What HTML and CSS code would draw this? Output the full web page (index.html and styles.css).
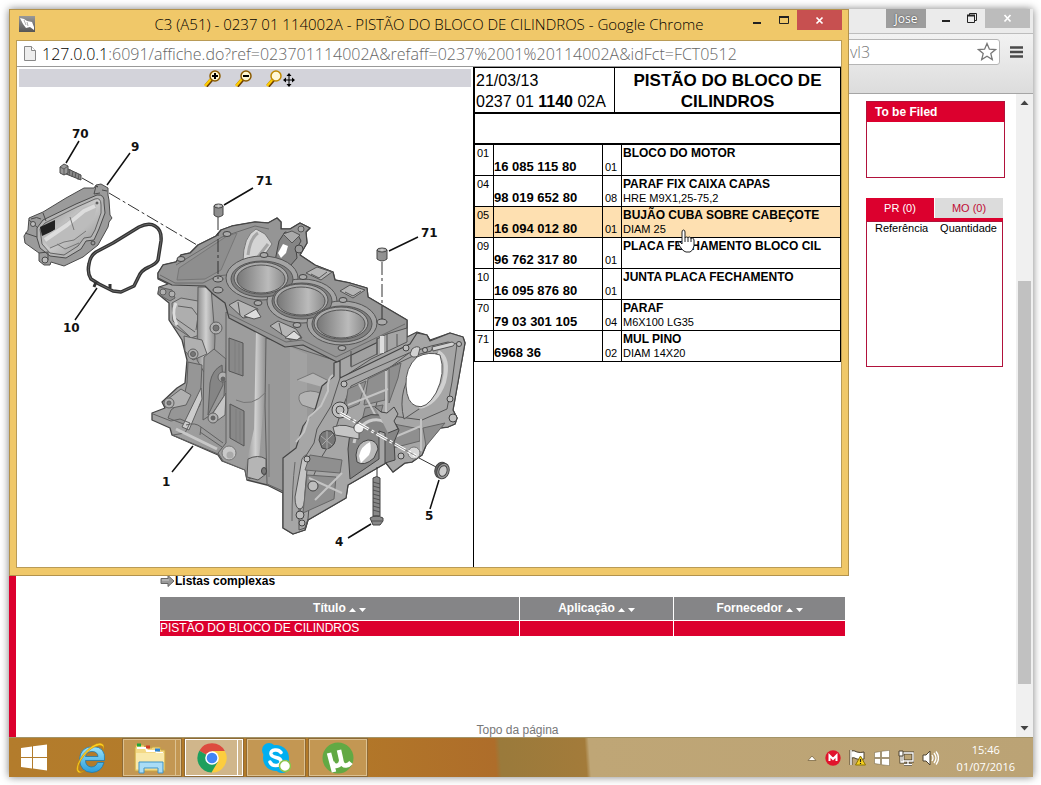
FILE: index.html
```html
<!DOCTYPE html>
<html lang="pt-BR">
<head>
<meta charset="utf-8">
<title>C3 (A51) - 0237 01 114002A</title>
<link rel="stylesheet" href="styles.css">
</head>
<body>
<div class="desktop">
  <section class="browser">
    <div class="browser-title">
      <button class="user-button">Jose</button>
      <div class="back-controls">
        <button aria-label="Minimizar"><svg width="26" height="19" viewBox="0 0 26 19"><path d="M9 12h8" stroke="#222" stroke-width="2"/></svg></button>
        <button aria-label="Restaurar"><svg width="26" height="19" viewBox="0 0 26 19"><path d="M8.500 6.500h7v7h-7zM10.500 6v-1.500h7v7H16" fill="none" stroke="#222"/><path d="M8 6.500h8" stroke="#222" stroke-width="2"/></svg></button>
        <button class="back-close" aria-label="Fechar"><svg width="45" height="19" viewBox="0 0 45 19"><path d="M19.500 6l6 6.500m0-6.500l-6 6.500" stroke="#fff" stroke-width="1.700"/></svg></button>
      </div>
    </div>
    <div class="browser-toolbar">
      <div class="back-address">
        <input type="text" aria-label="Endereço" value="vl3">
        <button aria-label="Favorito"><svg width="20" height="20" viewBox="0 0 20 20"><path d="M10 1.500l2.400 5.700 6.100.4-4.700 4 1.500 6L10 14.300l-5.300 3.300 1.500-6-4.700-4 6.100-.4z" fill="#fff" stroke="#777" stroke-width="1.300"/></svg></button>
      </div>
      <button class="menu-button" aria-label="Menu"><svg width="14" height="14" viewBox="0 0 14 14"><path d="M0 2.500h13M0 7h13M0 11.500h13" stroke="#4a4a4a" stroke-width="2.500"/></svg></button>
    </div>
    <div class="page">
      <main class="main">
        <h2 class="list-title"><svg width="15" height="14" viewBox="0 0 15 14"><path d="M1 4.500h7V1.500l6 5.500-6 5.500V9.500H1z" fill="#999" stroke="#666"/><path d="M2 6h7" stroke="#ccc"/></svg>Listas complexas</h2>
        <table class="list">
          <colgroup><col class="c-title"><col class="c-app"><col></colgroup>
          <thead><tr>
            <th>Título <svg width="17" height="5" viewBox="0 0 17 5"><path d="M0 5l3.500-4L7 5zM10 1h7l-3.500 4z" fill="#fff"/></svg></th>
            <th>Aplicação <svg width="17" height="5" viewBox="0 0 17 5"><path d="M0 5l3.500-4L7 5zM10 1h7l-3.500 4z" fill="#fff"/></svg></th>
            <th>Fornecedor <svg width="17" height="5" viewBox="0 0 17 5"><path d="M0 5l3.500-4L7 5zM10 1h7l-3.500 4z" fill="#fff"/></svg></th>
          </tr></thead>
          <tbody><tr><td>PISTÃO DO BLOCO DE CILINDROS</td><td></td><td></td></tr></tbody>
        </table>
        <a class="top-link" href="#">Topo da página</a>
      </main>
      <aside class="side">
        <section class="filed"><h3>To be Filed</h3></section>
        <section class="basket">
          <div class="tabs"><button class="tab active">PR (0)</button><button class="tab">MO (0)</button></div>
          <div class="basket-body"><span>Referência</span><span>Quantidade</span></div>
        </section>
      </aside>
      <div class="scrollbar">
        <svg width="17" height="17" viewBox="0 0 17 17"><path d="M4.500 11l4-4.500 4 4.500z" fill="#444"/></svg>
        <div class="track"><div class="thumb"></div></div>
        <svg width="17" height="17" viewBox="0 0 17 17"><path d="M4.500 6l4 4.500 4-4.500z" fill="#444"/></svg>
      </div>
    </div>
  </section>

  <section class="popup">
    <header class="popup-title">
      <svg class="app-icon" width="16" height="16" viewBox="0 0 16 16"><defs><linearGradient id="ai" x2="0" y2="1"><stop stop-color="#999"/><stop offset="1" stop-color="#555"/></linearGradient></defs><path fill="url(#ai)" d="M0 0h16v16H0z"/><path d="M1 2l4 1 3 2 5 1 2 5v3l-4-3-4 1-3-4z" fill="#fff"/><path d="M5 4l2 5M8 6l1 4" stroke="#999" stroke-width=".8"/></svg>
      <h1>C3 (A51) - 0237 01 114002A - PISTÃO DO BLOCO DE CILINDROS - Google Chrome</h1>
      <div class="popup-controls">
        <button aria-label="Minimizar"><svg width="27" height="20" viewBox="0 0 27 20"><path d="M10 13h8" stroke="#222" stroke-width="2"/></svg></button>
        <button aria-label="Maximizar"><svg width="27" height="20" viewBox="0 0 27 20"><path d="M9.500 6.500h9v7h-9z" fill="none" stroke="#222"/><path d="M9 7h10" stroke="#222" stroke-width="2"/></svg></button>
        <button class="close" aria-label="Fechar"><svg width="45" height="20" viewBox="0 0 45 20"><path d="M19.500 7.500l6 6m0-6l-6 6" stroke="#fff" stroke-width="1.700"/></svg></button>
      </div>
    </header>
    <div class="popup-frame">
      <div class="address">
        <svg width="12" height="15" viewBox="0 0 12 15"><path d="M.5.500h7l4 4v10H.5z" fill="#eee" stroke="#888"/><path d="M7.500.500v4h4" fill="#fff" stroke="#888"/></svg>
        <span><b>127.0.0.1</b>:6091/affiche.do?ref=023701114002A&amp;refaff=0237%2001%20114002A&amp;idFct=FCT0512</span>
      </div>
      <div class="panes">
        <div class="drawing">
          <div class="zoombar">
            <button aria-label="Aproximar"><svg width="18" height="17" viewBox="0 0 18 17"><path d="M2 16l6-7" stroke="#6b3d00" stroke-width="4"/><path d="M1 16l6-7" stroke="#fc0" stroke-width="2.500"/><circle cx="11" cy="6" r="5" fill="#fff6d0" stroke="#8a5a00" stroke-width="1.500"/><path d="M8 6h6M11 3v6" stroke="#000" stroke-width="2"/></svg></button>
            <button aria-label="Afastar"><svg width="18" height="17" viewBox="0 0 18 17"><path d="M2 16l6-7" stroke="#6b3d00" stroke-width="4"/><path d="M1 16l6-7" stroke="#fc0" stroke-width="2.500"/><circle cx="11" cy="6" r="5" fill="#fff6d0" stroke="#8a5a00" stroke-width="1.500"/><path d="M8 6h6" stroke="#000" stroke-width="2"/></svg></button>
            <button aria-label="Mover"><svg width="29" height="17" viewBox="0 0 29 17"><path d="M2 16l6-7" stroke="#6b3d00" stroke-width="4"/><path d="M1 16l6-7" stroke="#fc0" stroke-width="2.500"/><circle cx="10" cy="6" r="5" fill="#fff8d8" stroke="#c08a00" stroke-width="1.500"/><path d="M23 5v10M18 10h10" stroke="#000"/><path d="M23 3l-2.500 3h5zM23 17l-2.500-3h5zM17 10l3-2.500v5zM29 10l-3-2.500v5z"/></svg></button>
          </div>
          <svg class="engine" viewBox="17 87 456 480" role="img" aria-label="Bloco do motor">
            <defs>
              <linearGradient id="body" x2="1" y2=".3"><stop stop-color="#aaa"/><stop offset=".45" stop-color="#979797"/><stop offset="1" stop-color="#a9a9a9"/></linearGradient>
              <linearGradient id="bore"><stop stop-color="#777"/><stop offset=".35" stop-color="#9b9b9b"/><stop offset=".65" stop-color="#bbb"/><stop offset="1" stop-color="#8b8b8b"/></linearGradient>
              <linearGradient id="shine"><stop stop-color="#8b8b8b"/><stop offset=".5" stop-color="#d0d0d0"/><stop offset="1" stop-color="#8e8e8e"/></linearGradient>
              <linearGradient id="coverIn" x2="1" y2="1"><stop stop-color="#888"/><stop offset=".5" stop-color="#ccc"/><stop offset="1" stop-color="#8a8a8a"/></linearGradient>
            </defs>
            <!-- side cover -->
            <g stroke="#4b4b4b" stroke-linejoin="round">
              <path d="M29 218L43 212 66 198 84 188 94 188 96 185 101 184 108 188V195L109 200 110 215 112 218 109 222 108 227 98 245 83 257 64 266 51 262 50 265 44 265 39 261V253L25 243 24 236 28 230z" fill="#9b9b9b"/>
              <path d="M37 228L43 220 76 204 97 195Q105 194 104 203L105 213 99 229 94 240 86 241 81 249 66 258 50 256 40 248 37 238z" fill="#b4b4b4"/>
              <path d="M40 229L45 223 77 207 95 199Q101 197 101 205L101 213 95 230 91 237 84 238 78 246 64 255 50 253 42 244z" fill="url(#coverIn)" stroke-width=".8"/>
              <path d="M40 227l15-7v10l-13 6z" fill="#222" stroke="none"/>
              <path d="M42 238l24-16 18-15 12-4q2 12-8 22l-18 14-20 10z" fill="#bcbcbc" stroke="none"/>
              <path d="M45 240l22-15 17-14 11-5" stroke="#ddd" stroke-width="4" fill="none"/>
              <path d="M50 248l14-6 10-2 12-9M57 244l8 5 14-6M70 217l4 13" fill="none" stroke="#777"/>
              <path d="M29 220l9 8M43 213l3 8M25 233l12 4M96 186l-2 8 6-1M39 253l9-1v8M102 190l5 1M31 219q6-3 10 0" fill="none"/>
              <circle cx="97" cy="203" r="1" fill="#888"/><circle cx="93" cy="243" r="2" fill="#999"/><circle cx="33" cy="224" r="2.500" fill="#bbb"/><circle cx="45" cy="260" r="3" fill="#bbb"/>
              <path d="M66 168l15 7v5l-15-6z" fill="#888"/><path d="M70 169l-1 6M73 171l-1 6M76 172l-1 6M79 174l-1 6" fill="none" stroke-width=".8"/>
              <path d="M60 167l4-3 4 2v7l-4 2-4-2z" fill="#999"/><path d="M60 167l4 2 4-3M64 169v6" fill="none" stroke-width=".8"/>
            </g>
            <!-- gasket -->
            <g fill="none" stroke-linejoin="round">
              <path d="M139 227Q149 222 155 226 162 230 161 241L158 260Q156 264 149 267 141 270 138 278L134 286 121 292 113 291 99 284 91 279Q87 273 89 264 90 256 96 252L113 243z" stroke="#333" stroke-width="3.500"/>
              <path d="M139 227Q149 222 155 226 162 230 161 241L158 260Q156 264 149 267 141 270 138 278L134 286 121 292 113 291 99 284 91 279Q87 273 89 264 90 256 96 252L113 243z" stroke="#777" stroke-width=".8"/>
              <path d="M96 282l-2 5M110 284v4" stroke="#333" stroke-width="3"/>
            </g>
            <!-- block silhouette -->
            <path d="M158 273L163 265 176 262 181 255 190 253 198 245 216 236 221 230 232 226 255 222 268 223 277 218 281 222 281 229 290 229 300 223 310 228 306 232 307 243 300 255 315 265 320 267 333 272 335 280 350 283 367 288 368 297 407 320V337L417 332 427 335 430 340 450 333 463 337 465 343 453 410 457 418 455 424 448 427 440 428 427 443 422 455 412 462 405 463 393 472 386 463 348 485 346 498 308 520 305 530 293 534 283 528 283 493 267 485 247 480 245 470 222 461 218 455 172 435 170 428 152 420V413L165 408 162 402 177 388 185 383 187 360 182 340 169 320V303L158 294 159 287 168 284 158 279z" fill="url(#body)" stroke="#444" stroke-width="1.300" stroke-linejoin="round"/>
            <!-- left side castings -->
            <g stroke="#606060" stroke-linejoin="round" fill="#b0b0b0">
              <path d="M159 287l13 3 3 8-5 3-12-7z" fill="#8c8c8c"/><circle cx="163" cy="292" r="3"/><circle cx="172" cy="294" r="3"/>
              <path d="M172 303l9-5 17 3 9 8-2 24-14 5-18-17z" fill="#aeaeae"/>
              <path d="M178 306l14 2 6 8-2 14M175 318l20 14M172 325l18 12" fill="none"/>
              <path d="M176 303q-5 10 1 22" stroke="#ddd" stroke-width="3" fill="none"/>
              <path d="M198 287h13l4 50-1 27-10 8-7-12z" fill="url(#shine)"/>
              <circle cx="216" cy="328" r="6"/><circle cx="216" cy="328" r="3" fill="#777"/>
              <path d="M184 336l18 4 5 14-14 6-8-9z"/><circle cx="193" cy="354" r="5"/><circle cx="193" cy="354" r="2.500" fill="#777"/>
              <path d="M188 362l14 3-2 40-14 20-18-7 3-8 12-9 4-18z" fill="#969696"/>
              <path d="M164 402l17-13 10 6-5 10-14 3z"/><circle cx="169" cy="403" r="5"/><circle cx="169" cy="403" r="2" fill="#777"/>
              <path d="M204 357l10-8 12 10-2 37-12 18-9 6z" fill="#999"/>
              <path d="M222 365q-10 5-12 18l-2 32 15-30z" fill="#858585"/><circle cx="223" cy="377" r="5"/><circle cx="223" cy="379" r="2" fill="#666"/>
              <path d="M201 388l-19 39 7 3 13-31z" fill="#ccc"/>
              <path d="M226 393l-15 23 3 7 11-8z" fill="#c5c5c5"/><circle cx="213" cy="418" r="5"/><circle cx="213" cy="418" r="2" fill="#666"/>
              <path d="M153 414l18 7 9-2 10 4-5 10-12 2M186 425q9-3 15 2l22 16M200 432l22 15M172 435l46 19M201 427l-1 8" fill="none"/>
              <path d="M176 429l41 20" stroke="#c8c8c8" stroke-width="3"/>
            </g>
            <!-- long front side -->
            <path d="M226 312l34 20-3 143-10 5-2-10-22-9-5-8 8-10z" fill="#9d9d9d" stroke="#606060"/>
            <path d="M256 331h10v45l-7 85-9 15-5-7 9-40z" fill="url(#shine)"/>
            <path d="M266 338l71 23v20l-34 63-8 12-1 40-27-12-2-78z" fill="#999" stroke="#606060"/>
            <path d="M290 347l17 7v84l-17 20z" fill="#a5a5a5" opacity=".7"/>
            <path d="M229 338l14 5v33l-14-5zM230 404l14 7v35l-14-8z" fill="#898989" stroke="#555"/>
            <path d="M235 341v31M239 343v31M236 409v32M240 411v33" stroke="#777" stroke-width=".6"/>
            <circle cx="229" cy="453" r="7" fill="#c9c9c9" stroke="#777"/><circle cx="230" cy="455" r="3.500" fill="#aaa"/>
            <path d="M248 459q10-5 18 0v15l-8 6-11-3z" fill="#b5b5b5" stroke="#555"/><ellipse cx="264" cy="471" rx="2.500" ry="3.500" fill="#777" stroke="#444"/>
            <path d="M297 380l16-7 24 12v6M300 394q10-6 22 0l4 9-12 6-12-4q-5-6-2-11" fill="#b4b4b4" stroke="#777"/>
            <path d="M236 400q16 8 30-8M269 384v93" fill="none" stroke="#777"/>
            <!-- deck -->
            <path d="M158 273L163 265 176 262 181 255 190 253 198 245 216 236 221 230 232 226 255 222 268 223 277 218 281 222 281 229 290 229 300 223 310 228 306 232 307 243 300 255 315 265 333 272 335 280 350 283 367 288 368 297 407 320V328L337 362 303 345 285 347 229 318 225 303 213 294 205 286 172 285 158 278z" fill="#959595" stroke="#444" stroke-width="1.200" stroke-linejoin="round"/>
            <path d="M160 275l15 8 28 0 14-7 9-1M229 314l57 28 16-2 34 17 69-33M176 265l46-28 33-11 14 3" fill="none" stroke="#6b6b6b"/>
            <path d="M179 268l48-32 10-3-16 37-16 9-28 1z" fill="#8e8e8e" stroke="#777"/>
            <path d="M243 262q0-26 13-33l9 5 7 10-6 9-10 6z" fill="#d4d4d4" stroke="#777"/>
            <path d="M248 255q2-17 10-22M257 258l11-14" stroke="#a4a4a4" stroke-width="3" fill="none"/>
            <path d="M275 261l4-20 6-9 13 3 3 6-5 9 1 8-7 8z" fill="#858585" stroke="#444"/>
            <path d="M278 253l5-9 5 2-2 7-5 5z" fill="#fff"/><path d="M283 234l9-3 8 4-8 8z" fill="#aaa" stroke="#555"/>
            <circle cx="301" cy="229" r="3" fill="#aaa" stroke="#555"/><circle cx="299" cy="249" r="4" fill="#999" stroke="#444"/>
            <g fill="#b5b5b5" stroke="#555">
              <path d="M306 273l11-6 15 5-11 8zM340 291l10-6 15 5-12 8zM229 305l9-5 20 9-2 7-13 2zM270 326l8-5 18 8 6 9-12 2z"/>
              <path d="M311 274l8 4 8-6M345 292l8 4 8-5M240 315l-2-13M282 335l-3-12" fill="none"/>
              <path d="M244 316l12-7 5 8-7 2zM285 338l9-7 7 6-4 3z" fill="#ddd"/>
            </g>
            <g stroke="#555">
              <g fill="#a4a4a4"><ellipse cx="262" cy="278" rx="36" ry="22"/><ellipse cx="302" cy="301" rx="35" ry="22"/><ellipse cx="342" cy="323" rx="35" ry="22"/></g>
              <g fill="#808080"><ellipse cx="262" cy="279" rx="31" ry="18"/><ellipse cx="302" cy="301" rx="30" ry="18"/><ellipse cx="342" cy="324" rx="30" ry="18"/></g>
              <g fill="#aaa"><ellipse cx="261" cy="278" rx="27" ry="16"/><ellipse cx="301" cy="300" rx="27" ry="16"/><ellipse cx="341" cy="323" rx="27" ry="16"/></g>
              <g fill="url(#bore)"><ellipse cx="261" cy="279" rx="24" ry="14"/><ellipse cx="301" cy="301" rx="24" ry="14"/><ellipse cx="341" cy="324" rx="24" ry="14"/></g>
            </g>
            <g fill="#aaa" stroke="#444"><ellipse cx="181" cy="259" rx="4" ry="2.500"/><ellipse cx="227" cy="234" rx="4" ry="2.500"/><ellipse cx="218" cy="290" rx="5" ry="3"/><ellipse cx="218" cy="279" rx="5" ry="3"/><ellipse cx="264" cy="255" rx="4" ry="2.500"/><ellipse cx="303" cy="277" rx="4" ry="2.500"/><ellipse cx="343" cy="300" rx="4" ry="2.500"/><ellipse cx="258" cy="303" rx="4" ry="2.500"/><ellipse cx="297" cy="325" rx="4" ry="2.500"/><ellipse cx="342" cy="348" rx="4" ry="2.500"/><ellipse cx="382" cy="322" rx="5" ry="3"/></g>
            <path d="M337 362l14-7v12l26-13v-15l10-5 20-6v14l-36 17-29 19-5-3z" fill="#a5a5a5" stroke="#555"/>
            <path d="M377 338v17M387 334v18M397 334v12M351 351v15" stroke="#555"/><path d="M382 336v17" stroke="#ddd" stroke-width="4"/>
            <!-- end flange -->
            <path d="M334 363l6-2v17l70-34 7-11 10 2 3 6 20-8 13 4 2 6-12 67 4 8-2 6-7 3-8 1-13 15-5 12-10 7-7 1-12 9-7-9-38 22-2 13-38 22-3 10-12 4-10-6V458l13-10 7-22 12-16 7-24 12-10z" fill="#a6a6a6" stroke="#444" stroke-width="1.200" stroke-linejoin="round"/>
            <path d="M340 378l-9 28-14 23-3 14-12 19-3 30v38l6-2 3-9 3-37 10-24 11-18 10-31 9-23 62-30 18-5 3-6M343 382l66-29 22-7 17-4 9 2-5 38-5 27-25 11-37-5-9-9 8-34 25-19" fill="none" stroke="#555"/>
            <path d="M295 462q-3 26-3 59M303 466l-3 50" stroke="#666" fill="none"/>
            <path d="M302 459q5-8 6 0l-3 33q0 17-5 17t-5-12z" fill="#c5c5c5" stroke="#555"/>
            <path d="M333 375q-6 3-5 16l-7 15-12 11-5 15-8 10" fill="none" stroke="#c4c4c4" stroke-width="2"/>
            <g fill="#8f8f8f" stroke="#666"><path d="M348 389l18-8-7 23-14 6zM368 379l18-9-1 30-21 5zM389 368l12-5-3 15-9 25zM365 408l18-3-4 15-17 1zM388 423l32 6v12l-31 8zM423 428l22-5-19 23zM310 455l32 5-2 13-35-3zM307 475l29 2-2 22-31 14z"/></g>
            <path d="M348 405l40-16M359 384l21 40M309 478l33 15M315 500l27-27M390 439l31-13M421 419v32M386 371v60" stroke="#c4c4c4" stroke-width="2"/>
            <path d="M404 419q-8-30 15-57l19-9q11 4 6 27-7 22-22 27z" fill="#aaa" stroke="#555"/>
            <path d="M438 352q12 6 6 30-8 22-25 25" fill="none" stroke="#d0d0d0" stroke-width="4"/>
            <path d="M406 386q-1-18 11-29 12-6 23-2 6 18-4 38-10 17-20 13-9-3-10-20z" fill="#fff" stroke="#555"/>
            <path d="M432 347l20-5q4 1 1 4l-20 5zM412 349q5-4 8-1l-2 8q-6 3-8-2z" fill="#d2d2d2" stroke="#555"/>
            <g fill="#bebebe" stroke="#444"><circle cx="459" cy="344" r="2.500"/><circle cx="450" cy="399" r="3"/><circle cx="453" cy="418" r="4"/><circle cx="344" cy="384" r="3"/><circle cx="406" cy="348" r="3"/><circle cx="425" cy="350" r="2.500"/><circle cx="307" cy="459" r="3"/><circle cx="300" cy="515" r="4"/><circle cx="302" cy="523" r="3"/><circle cx="313" cy="486" r="5"/><circle cx="340" cy="410" r="8"/><circle cx="340" cy="410" r="4"/><circle cx="401" cy="456" r="3"/></g>
            <!-- main bearing -->
            <path d="M350 433q11-22 30-18 14 2 19 15l-5 12 1 18-10 3v-30l-6-2v28l-29 20-2-30z" fill="#858585" stroke="#444"/>
            <path d="M354 443q4-20 19-23 12-2 18 10" fill="none" stroke="#ccc" stroke-width="3"/>
            <path d="M375 407l6 5 6 1 7-6 4 7-4 7 4 8-10 4" fill="#aaa" stroke="#444"/>
            <path d="M356 455q1-13 12-15 9 0 10 9l-4 9q-10 9-17 4z" fill="#bababa" stroke="#444"/><path d="M359 456q2-10 11-14 2 7-1 13l-8 8z" fill="#fff"/>
            <path d="M319 440q1-11 12-9 7 6 3 13-5 7-12 4z" fill="#777" stroke="#444"/><path d="M321 436l11 9m1-11l-11 11M327 431v18" stroke="#aaa"/>
            <path d="M333 427q13-5 26 4v8l-24-4z" fill="#c5c5c5" stroke="#555"/><circle cx="359" cy="428" r="5" fill="#eee" stroke="#666"/><circle cx="414" cy="453" r="6" fill="#d8d8d8" stroke="#777"/>
            <!-- axes -->
            <g fill="none" stroke="#333" stroke-width="1"><path d="M82 178l16 9M109 193l88 52" stroke-dasharray="13 3 3 3"/><path d="M218 217v62M382 262v58" stroke-dasharray="13 3 3 3"/><path d="M419 458l17 9M377 467v11"/></g>
            <path d="M340 413l76 43" stroke="#fff" stroke-width="3" stroke-dasharray="12 3 3 3"/><path d="M340 413l76 43" stroke="#666" stroke-width=".7"/>
            <!-- pins, plug, bolt -->
            <g stroke="#444" fill="url(#shine)"><path d="M214 206v9q4 4 9 0v-9zM377 250v9q5 4 10 0v-9z"/><ellipse cx="218.500" cy="206" rx="4.500" ry="2"/><ellipse cx="382" cy="250" rx="5" ry="2"/>
              <ellipse cx="441" cy="470" rx="6" ry="8" transform="rotate(20 441 470)" fill="#666"/><ellipse cx="443" cy="471" rx="6" ry="8" transform="rotate(20 443 471)" fill="#999"/><ellipse cx="443" cy="471" rx="4" ry="5.500" transform="rotate(20 443 471)" fill="#ccc"/>
              <path d="M373 478q4-3 7 0v38h-7zM370 518q6-4 13 0v3l-3 4h-7z" fill="#888"/><path d="M373 482l7 2M373 486l7 2M373 490l7 2M373 494l7 2M373 498l7 2M373 502l7 2M373 506l7 2M373 510l7 2M371 521h11" stroke-width=".8"/></g>
            <!-- callouts -->
            <path d="M79 141l-13 22M130 153l-23 32M75 320l22-32M253 188l-29 17M418 237l-29 14M172 472l21-26M348 538l23-14M430 509l9-29" stroke="#111" stroke-width="1.500"/>
            <g class="callouts"><text x="72" y="138">70</text><text x="131" y="151">9</text><text x="256" y="185">71</text><text x="421" y="237">71</text><text x="63" y="332">10</text><text x="162" y="486">1</text><text x="335" y="546">4</text><text x="425" y="520">5</text></g>
          </svg>
        </div>
        <div class="parts-pane">
          <table class="parts-head">
            <tr><td class="ref">21/03/13<br>0237 01 <b>1140</b> 02A</td><th>PISTÃO DO BLOCO DE CILINDROS</th></tr>
            <tr class="blank"><td colspan="2"></td></tr>
          </table>
          <table class="parts">
            <colgroup><col class="p-num"><col class="p-code"><col class="p-qty"><col></colgroup>
            <tr><td>01</td><th>16 085 115 80</th><td class="qty">01</td><td><b>BLOCO DO MOTOR</b></td></tr>
            <tr><td>04</td><th>98 019 652 80</th><td class="qty">08</td><td><b>PARAF FIX CAIXA CAPAS</b>HRE M9X1,25-75,2</td></tr>
            <tr class="selected"><td>05</td><th>16 094 012 80</th><td class="qty">01</td><td class="hovered"><b>BUJÃO CUBA SOBRE CABEÇOTE</b>DIAM 25<svg class="cursor" width="18" height="24" viewBox="0 0 18 24"><path d="M5 15V3q0-2 1.500-2T8 3v6q0-1 1.500-1t1.500 1q0-1 1.500-1T14 10q0-1 1.300-1T17 11v6q-1 5-4 6H9q-4-1-8-9 0-2 2-1z" fill="#fff" stroke="#222"/><path d="M8 9v4M11 9v4M14 10v3" stroke="#222"/></svg></td></tr>
            <tr><td>09</td><th>96 762 317 80</th><td class="qty">01</td><td><b>PLACA FECHAMENTO BLOCO CIL</b></td></tr>
            <tr><td>10</td><th>16 095 876 80</th><td class="qty">01</td><td><b>JUNTA PLACA FECHAMENTO</b></td></tr>
            <tr><td>70</td><th>79 03 301 105</th><td class="qty">04</td><td><b>PARAF</b>M6X100 LG35</td></tr>
            <tr><td>71</td><th>6968 36</th><td class="qty">02</td><td><b>MUL PINO</b>DIAM 14X20</td></tr>
          </table>
        </div>
      </div>
    </div>
  </section>

  <footer class="taskbar">
    <button class="plain start" aria-label="Iniciar"><svg width="28" height="28" viewBox="0 0 28 28"><path d="M1 4l11-1.500V13H1zM13 2.300L27 .5V13H13zM1 14h11v10.500L1 23zM13 14h14v12.500l-14-2z" fill="#fff"/></svg></button>
    <button class="plain ie" aria-label="Internet Explorer"><svg width="32" height="32" viewBox="0 0 32 32"><defs><linearGradient id="ieg" x2="0" y2="1"><stop stop-color="#9be4fb"/><stop offset="1" stop-color="#2b9ddb"/></linearGradient></defs><path d="M22.500 20.500Q21 25 16 25 10.500 24 10.500 18.500H29.500Q31 5 18 4.500 5 5 4.500 17.500 5 30 17 30.500 26.500 30 29 20.500zM10.500 14.500Q11.500 9.500 17 9.500 22.500 9.500 23 14.500z" fill="url(#ieg)" fill-rule="evenodd" stroke="#2279a8" stroke-width=".8"/><path d="M28 9q1.500-6-4-5.500Q16 5 9 14 2 23 3.500 28 5 31 10 28.500 4 33 2 29 0 23 8.500 12 18 1 25 1q6 1 3 8z" fill="#ffcf20" stroke="#b9830b" stroke-width=".5"/></svg></button>
    <button class="task stacked" aria-label="Explorador de arquivos"><svg width="34" height="32" viewBox="0 0 34 32"><path d="M2 6l1-3h8l1 3h7V5h8l1 3h4v21H2z" fill="#f3d985" stroke="#c9a542"/><path d="M4 6h9l1 3h9l1 2h6" stroke="#fff" stroke-width="2" fill="none"/><path d="M4 3h4" stroke="#1ca83c" stroke-width="3"/><path d="M13 5h4" stroke="#d33b24" stroke-width="3"/><path d="M22 8h5" stroke="#2d83d0" stroke-width="3"/><path d="M3 11h28v16H3z" fill="#f9e9ab"/><path d="M6 31V20h24v11h-5v-5H11v5z" fill="#a9dcf6" stroke="#3f93c5"/></svg></button>
    <button class="task stacked current" aria-label="Google Chrome"><svg width="30" height="30" viewBox="0 0 30 30"><path d="M15 15L2.300 7.700A14.600 14.600 0 0 1 27.800 8z" fill="#dd4b3e"/><path d="M15 15V8h12.800A14.600 14.600 0 0 1 14.500 29.600z" fill="#fccd3f"/><path d="M15 15l5.700 4-6.200 10.600A14.600 14.600 0 0 1 2.300 7.700z" fill="#1d9f5d"/><circle cx="15" cy="15" r="6.800" fill="#fff"/><circle cx="15" cy="15" r="5.300" fill="#4285f4"/></svg></button>
    <button class="task" aria-label="Skype"><svg width="30" height="32" viewBox="0 0 30 32"><rect x="2" y="3" width="26" height="26" rx="13" fill="#00aff0"/><circle cx="8" cy="8" r="7" fill="#00aff0"/><circle cx="21" cy="23" r="8" fill="#00aff0"/><path d="M20 10.500Q18 7.500 14 8 9.500 8.500 10 12q.5 2.500 5 3.500 5 1 5 4 0 4-5.500 4-4 0-5.500-3.500" fill="none" stroke="#fff" stroke-width="3.500" stroke-linecap="round"/><circle cx="24" cy="24" r="5.500" fill="#fff" stroke="#8cc34a" stroke-width="1.500"/></svg></button>
    <button class="task" aria-label="µTorrent"><svg width="32" height="32" viewBox="0 0 32 32"><circle cx="16" cy="16" r="15.500" fill="#62a944"/><path d="M7 11l5 19M10 20q2 5 6 3.500 4-2 3-6.500L17 8M19 17q1 7 5 6.500 3-.5 5-3" fill="none" stroke="#fff" stroke-width="4.500"/></svg></button>
    <div class="tray">
      <svg width="10" height="8" viewBox="0 0 10 8"><path d="M1 6.500L5 2l4 4.500z" fill="#fff" stroke="#7c6842" stroke-width=".8"/></svg>
      <svg width="16" height="16" viewBox="0 0 16 16"><circle cx="8" cy="8" r="7.700" fill="#e1142c"/><path d="M4.500 11V5.500L8 9l3.500-3.500V11" fill="none" stroke="#fff" stroke-width="2"/></svg>
      <svg width="17" height="17" viewBox="0 0 17 17"><path d="M2 1v15" stroke="#4c4230" stroke-width="3"/><path d="M2 2q3-1 6 1 3 1 7 0v7q-4 1-7 0-3-2-6-1z" fill="#fff" stroke="#4c4230"/><path d="M2 1v15" stroke="#fff" stroke-width="1.500"/><path d="M11.500 7l5 9h-10z" fill="#f5d020" stroke="#8d7400"/><path d="M11.500 10v3M11.500 14v1" stroke="#222" stroke-width="1.200"/></svg>
      <svg width="16" height="16" viewBox="0 0 16 16"><path d="M.5 2.500l6-1v6h-6zM7.500 1.300l8-1v7.200h-8zM.5 8.500h6v6l-6-1zM7.500 8.500h8v7.200l-8-1z" fill="#fff" stroke="#6b5a38" stroke-width=".5"/></svg>
      <svg width="16" height="16" viewBox="0 0 16 16"><path d="M5 3h10v8H5zM10 11v3M6 14.500h8M3 6v6h3" fill="none" stroke="#4c4230" stroke-width="3"/><path d="M5 3h10v8H5zM10 11v3M6 14.500h8M3 6v6h3" fill="none" stroke="#fff" stroke-width="1.400"/><path d="M1 1h4v5H1z" fill="#fff" stroke="#4c4230"/></svg>
      <svg width="17" height="16" viewBox="0 0 17 16"><path d="M1 5h3l4-4v14l-4-4H1z" fill="#fff" stroke="#4c4230"/><path d="M10 5q2 3 0 6M12 3q4 5 0 10M14 1.500q5 6.500 0 13" fill="none" stroke="#fff" stroke-width="1.300"/></svg>
      <time class="clock">15:46<br>01/07/2016</time>
    </div>
  </footer>
</div>
</body>
</html>
```
FILE: styles.css
```css
* { box-sizing: border-box; }
body {
  margin: 0;
  padding: 9px 8px 8px 9px;
  background: #fff;
  font-family: "Liberation Sans", Arial, sans-serif;
  font-size: 12px;
  color: #000;
}
button {
  margin: 0;
  padding: 0;
  border: 0;
  background: none;
  font: inherit;
  color: inherit;
}
svg { display: block; }
h1, h2, h3 { margin: 0; font-size: inherit; }
table { border-collapse: collapse; width: 100%; table-layout: fixed; }

.desktop {
  position: relative;
  display: flex;
  flex-direction: column;
  min-height: calc(100vh - 17px);
  box-shadow: 0 0 8px rgba(0, 0, 0, .5);
}

/* Background browser */
.browser { flex: 1; display: flex; flex-direction: column; background: #fff; }
.browser-title {
  display: flex;
  justify-content: flex-end;
  gap: 7px;
  height: 24px;
  padding-right: 3px;
  background: #ebebeb;
}
.user-button {
  width: 40px;
  height: 19px;
  background: #9d9d9d;
  color: #fff;
  font: 12px "Open Sans", sans-serif;
  text-shadow: 0 0 2px #333;
}
.back-controls { display: flex; height: 19px; }
.back-close { background: #bcbcbc; }
.browser-toolbar {
  display: flex;
  align-items: flex-start;
  justify-content: flex-end;
  gap: 10px;
  height: 61px;
  padding: 5px 9px 0 0;
  border-top: 1px solid #bdbdbd;
  border-bottom: 1px solid #a5a5a5;
  background: linear-gradient(#f2f2f2, #dcdcdc);
}
.back-address {
  display: flex;
  align-items: center;
  width: 170px;
  height: 26px;
  padding: 0 2px 0 16px;
  border: 1px solid #b5b5b5;
  border-radius: 3px;
  background: #fff;
}
.back-address input {
  flex: 1;
  min-width: 0;
  padding: 0 0 0 3px;
  border: 0;
  color: #777;
  font: 300 16px "Open Sans", sans-serif;
}
.menu-button { padding-top: 6px; }
.page { flex: 1; display: flex; border-left: 7px solid #dc002e; }
.main {
  flex: 1;
  display: flex;
  flex-direction: column;
  padding: 479px 21px 0 144px;
}
.list-title {
  display: flex;
  align-items: center;
  height: 16px;
  margin-bottom: 8px;
  font-size: 12px;
}
.list .c-title { width: 52.5%; }
.list .c-app { width: 22.5%; }
.list th { height: 23px; padding: 0; background: #858587; color: #fff; }
.list th svg { display: inline-block; }
.list td { height: 15px; padding: 0; background: #dc002e; color: #fff; line-height: 15px; }
.list th + th, .list td + td { border-left: 1px solid #fff; }
.list td { border-top: 1px solid #fff; }
.top-link {
  align-self: center;
  margin: auto 0 0 30px;
  line-height: 13px;
  color: #777;
  text-decoration: none;
}
.side { width: 150px; padding: 7px 11px 0 0; }
.filed { min-height: 77px; border: 1px solid #b1123b; }
.filed h3 { height: 20px; padding-left: 8px; background: #dc002e; color: #fff; line-height: 21px; }
.basket { margin: 20px 2px 0 0; }
.tabs { display: flex; gap: 1px; border-bottom: 3px solid #dc002e; }
.tab { flex: 1; height: 20px; background: #dcdcdc; color: #c00d35; font-size: 11px; }
.tab.active { background: #dc002e; color: #fff; }
.basket-body {
  display: flex;
  justify-content: space-between;
  min-height: 146px;
  padding: 0 5px 0 8px;
  border: 1px solid #b1123b;
  font-size: 11px;
}
.scrollbar { display: flex; flex-direction: column; width: 17px; background: #f0f0f0; }
.track { flex: 1; padding: 170px 2px 36px; }
.thumb { height: 100%; background: #c1c1c1; }

/* Popup window */
.popup {
  position: absolute;
  top: 0;
  left: 0;
  right: 184px;
  padding: 0 6px 7px;
  border: 1px solid #b2924c;
  background: #f0c869;
}
.popup-title { display: grid; grid-template-columns: 1fr auto 1fr; height: 30px; }
.app-icon { margin: 6px 0 0 3px; }
.popup-title h1 {
  font: 300 15px "Open Sans", sans-serif;
  line-height: 29px;
  white-space: nowrap;
  color: #000;
}
.popup-controls { display: flex; justify-content: flex-end; align-items: flex-start; }
.popup-controls .close { background: #c75050; }
.popup-frame { border: 1px solid #b99b57; background: #fff; }
.address {
  display: flex;
  align-items: center;
  gap: 6px;
  height: 26px;
  padding-left: 7px;
  border-bottom: 1px solid #999;
  font: 300 16px "Open Sans", sans-serif;
  color: #666;
  white-space: nowrap;
  overflow: hidden;
}
.address b { font-weight: 300; color: #000; }
.panes { display: grid; grid-template-columns: 456fr 368fr; }
.zoombar {
  display: flex;
  justify-content: center;
  gap: 13px;
  height: 18px;
  margin: 2px 2px 0;
  padding-left: 8px;
  background: #d3d3da;
}
.engine { width: 100%; height: auto; }
.callouts { font: bold 12px "DejaVu Sans", sans-serif; fill: #111; }
.parts-pane { border-left: 1px solid #000; }
.parts-head td, .parts-head th { border: 1px solid #000; padding: 2px 0 0 1px; }
.parts-head td, .parts-head th { font-size: 16px; line-height: 21px; text-align: center; }
.parts-head th { font-size: 17px; padding: 2px 12px 0; }
.parts-head .ref { width: 140px; text-align: left; white-space: nowrap; }
.parts-head .blank td { height: 30px; border-width: 2px 1px 1px; padding: 0; }
.parts td, .parts th {
  height: 31px;
  padding: 1px 1px 1px 2px;
  border: 1px solid #000;
  font-size: 11px;
  line-height: 14px;
  vertical-align: top;
}
.parts th { padding-left: 0; font-size: 13px; text-align: left; vertical-align: bottom; }
.parts .qty { vertical-align: bottom; }
.parts td b { display: block; font-size: 12px; white-space: nowrap; }
.parts td:last-child { padding-left: 1px; }
.p-num { width: 19px; }
.p-code { width: 109px; }
.p-qty { width: 19px; }
.selected { background: #fee0b1; }
.hovered { position: relative; }
.cursor { position: absolute; left: 55px; top: 22px; z-index: 1; }

/* Taskbar */
.taskbar {
  display: flex;
  height: 40px;
  border-top: 1px solid #a39468;
  background: linear-gradient(86deg, #b37c2c 0, #b37a28 30%, #ae6d2a 47.500%, #9a7a3b 48%, #a37b3a 56.300%, #bfa676 56.700%, #bba375 100%);
}
.taskbar button { display: flex; align-items: center; justify-content: center; }
.plain { width: 56px; }
.start { width: 50px; }
.ie { width: 63px; }
.task {
  width: 60px;
  margin-right: 2px;
  border: 1px solid #8f6a35;
  background: #c39753;
  box-shadow: inset 0 0 0 1px #dcc191;
}
.task.stacked { padding-right: 5px; box-shadow: inset 0 0 0 1px #dcc191, inset -5px 0 0 #c39753, inset -6px 0 0 #dcc191; }
.task.current { background: #d0b68b; box-shadow: inset 0 0 0 1px #fff, inset -5px 0 0 #d0b68b, inset -6px 0 0 #fff; }
.tray { display: flex; align-items: center; gap: 8px; margin-left: auto; padding-right: 18px; }
.clock {
  margin-left: 10px;
  color: #fff;
  font: 11px "Open Sans", sans-serif;
  line-height: 17px;
  text-align: center;
}
```
